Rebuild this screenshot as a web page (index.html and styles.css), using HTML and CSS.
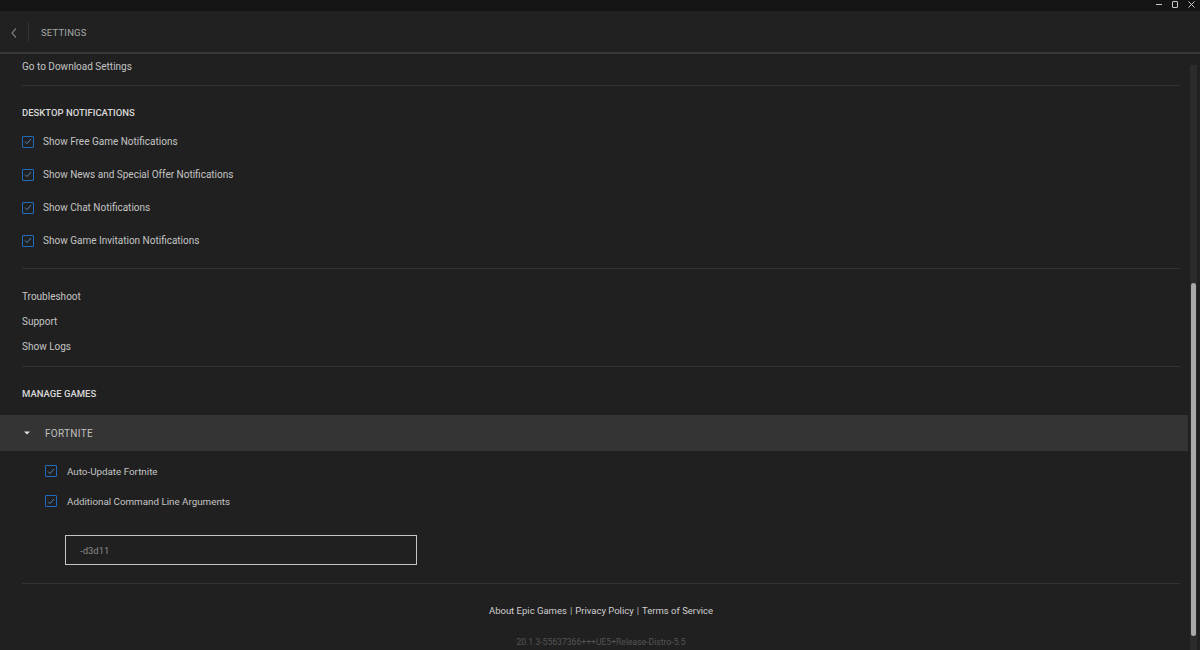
FILE: index.html
```html
<!DOCTYPE html>
<html>
<head>
<meta charset="utf-8">
<link rel="stylesheet" href="styles.css">
</head>
<body>
<div class="titlebar">
  <span class="wc wc-min"></span>
  <span class="wc wc-max"></span>
  <svg class="wc-close" width="7" height="7" viewBox="0 0 7 7"><path d="M0.5 0.5 L6.5 6.5 M6.5 0.5 L0.5 6.5" stroke="#c8c8c8" stroke-width="1"/></svg>
</div>
<div class="header">
  <svg class="back" width="6" height="10" viewBox="0 0 6 10"><path d="M5 0.5 L1 5 L5 9.5" fill="none" stroke="#7a7a7a" stroke-width="1.2"/></svg>
  <span class="vsep"></span>
  <span class="title">SETTINGS</span>
</div>
<div class="main">
  <div class="content">
    <div class="pad">
      <div class="link-row first">Go to Download Settings</div>
      <div class="divider d1"></div>
      <div class="heading h1">DESKTOP NOTIFICATIONS</div>
      <div class="check-row"><span class="cb"><svg width="8" height="7" viewBox="0 0 8 7"><path d="M1 3.6 L3 5.6 L7 1" fill="none" stroke="#5a8fd0" stroke-width="0.9"/></svg></span>Show Free Game Notifications</div>
      <div class="check-row"><span class="cb"><svg width="8" height="7" viewBox="0 0 8 7"><path d="M1 3.6 L3 5.6 L7 1" fill="none" stroke="#5a8fd0" stroke-width="0.9"/></svg></span>Show News and Special Offer Notifications</div>
      <div class="check-row"><span class="cb"><svg width="8" height="7" viewBox="0 0 8 7"><path d="M1 3.6 L3 5.6 L7 1" fill="none" stroke="#5a8fd0" stroke-width="0.9"/></svg></span>Show Chat Notifications</div>
      <div class="check-row"><span class="cb"><svg width="8" height="7" viewBox="0 0 8 7"><path d="M1 3.6 L3 5.6 L7 1" fill="none" stroke="#5a8fd0" stroke-width="0.9"/></svg></span>Show Game Invitation Notifications</div>
      <div class="divider d2"></div>
      <div class="links">
        <div class="link-row">Troubleshoot</div>
        <div class="link-row">Support</div>
        <div class="link-row">Show Logs</div>
      </div>
      <div class="divider d3"></div>
      <div class="heading h2">MANAGE GAMES</div>
    </div>
    <div class="game-row">
      <svg class="caret" width="6" height="4" viewBox="0 0 6 4"><path d="M0 0.5 L6 0.5 L3 3.5 Z" fill="#e0e0e0"/></svg>
      <span>FORTNITE</span>
    </div>
    <div class="pad">
      <div class="game-opts">
        <div class="check-row sub"><span class="cb"><svg width="8" height="7" viewBox="0 0 8 7"><path d="M1 3.6 L3 5.6 L7 1" fill="none" stroke="#5a8fd0" stroke-width="0.9"/></svg></span>Auto-Update Fortnite</div>
        <div class="check-row sub"><span class="cb"><svg width="8" height="7" viewBox="0 0 8 7"><path d="M1 3.6 L3 5.6 L7 1" fill="none" stroke="#5a8fd0" stroke-width="0.9"/></svg></span>Additional Command Line Arguments</div>
        <div class="input">-d3d11</div>
      </div>
      <div class="divider d4"></div>
      <div class="footer">
        <span>About Epic Games</span><span class="bar">|</span><span>Privacy Policy</span><span class="bar">|</span><span>Terms of Service</span>
      </div>
      <div class="version">20.1.3-55637366+++UE5+Release-Distro-5.5</div>
    </div>
  </div>
  <div class="scroll">
    <div class="track"><div class="thumb"></div></div>
  </div>
</div>
</body>
</html>
```

FILE: styles.css
```css
* { box-sizing: border-box; margin: 0; padding: 0; }
html, body { width: 1200px; height: 650px; overflow: hidden; }
body {
  background: #202020;
  font-family: Roboto, "Liberation Sans", sans-serif;
  font-size: 10px;
  color: #c4c4c4;
}
.titlebar {
  height: 11px;
  background: #141414;
  display: flex;
  justify-content: flex-end;
  align-items: center;
  gap: 10px;
  padding-right: 5px;
}
.wc { display: block; }
.wc-min { width: 6px; height: 1px; background: #c8c8c8; margin-top: -2px; }
.wc-max { width: 6px; height: 7px; border: 1px solid #c8c8c8; border-radius: 1px; margin-top: -2px; }
.wc-close { margin-top: -2px; }
.header {
  height: 43px;
  background: #212121;
  border-bottom: 2px solid #383838;
  display: flex;
  align-items: center;
  padding-left: 11px;
}
.back { margin-top: 2px; }
.vsep { width: 1px; height: 20px; background: #333; margin-left: 11px; margin-right: 12px; }
.title { color: #a8a8a8; font-size: 9.5px; letter-spacing: 0.2px; margin-top: 1px; }
.main { display: flex; height: 596px; }
.content { flex: 1; }
.pad { padding-left: 22px; padding-right: 8px; }
.link-row { height: 25px; display: flex; align-items: center; }
.link-row.first { height: 25px; }
.divider { height: 1px; background: #333333; }
.d1 { margin-top: 6px; }
.heading { height: 26px; display: flex; align-items: center; font-weight: 500; font-size: 9.5px; color: #d8d8d8; }
.h1 { margin-top: 13px; }
.check-row { height: 33px; display: flex; align-items: center; }
.cb {
  width: 12px; height: 12px;
  border: 1.5px solid #1f6bc0;
  border-radius: 1px;
  margin-right: 9px;
  display: flex; align-items: center; justify-content: center;
}
.d2 { margin-top: 11px; }
.links { margin-top: 15px; }
.d3 { margin-top: 7px; }
.h2 { margin-top: 13px; }
.game-row {
  margin-top: 9px;
  height: 36px;
  background: #343434;
  display: flex;
  align-items: center;
  padding-left: 24px;
  color: #c0c0c0;
  letter-spacing: 0.3px;
}
.caret { margin-right: 15px; }
.game-opts { padding-left: 23px; padding-top: 5px; }
.check-row.sub { height: 30px; font-size: 9.8px; }
.sub .cb { margin-right: 10px; }
.input {
  margin-top: 19px;
  margin-left: 20px;
  width: 352px;
  height: 30px;
  border: 1px solid #c4c4c4;
  display: flex;
  align-items: center;
  padding-left: 14px;
  color: #8a8a8a;
  font-size: 9.5px;
  margin-bottom: 18px;
}
.footer {
  margin-top: 13px;
  height: 26px;
  display: flex;
  align-items: center;
  justify-content: center;
  color: #cfcfcf;
  font-size: 9.5px;
}
.bar { margin: 0 3px; color: #bbb; }
.version { height: 16px; display: flex; align-items: center; justify-content: center; color: #555; font-size: 8.6px; margin-top: 11px; }
.scroll { width: 12px; padding-top: 11px; padding-left: 2px; }
.track { width: 7px; height: 100%; background: #2b2b2b; padding: 218px 1px 0 1px; }
.thumb { width: 5px; height: 353px; background: #a9a9a9; border-radius: 3px; }
```
